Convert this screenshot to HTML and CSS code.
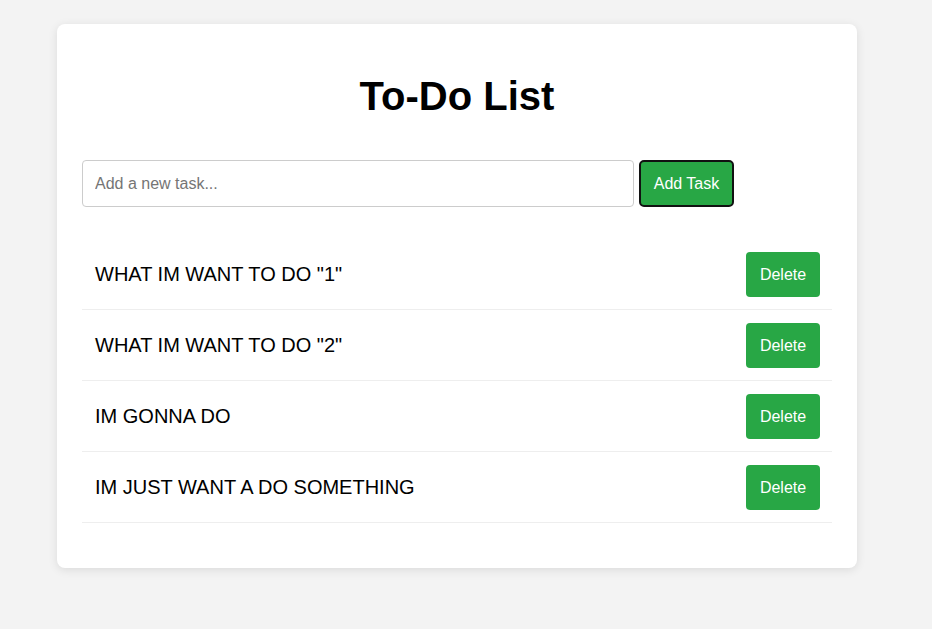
FILE: index.html
```html
<!DOCTYPE html>
<html lang="en">
<head>
<meta charset="UTF-8">
<title>To-Do List</title>
<link rel="stylesheet" href="styles.css">
</head>
<body>
<div class="card">
  <h1 class="title">To-Do List</h1>
  <div class="add-row">
    <input class="task-input" type="text" placeholder="Add a new task...">
    <button class="add-btn">Add Task</button>
  </div>
  <ul class="task-list">
    <li class="task"><span class="task-text">WHAT IM WANT TO DO "1"</span><button class="del-btn">Delete</button></li>
    <li class="task"><span class="task-text">WHAT IM WANT TO DO "2"</span><button class="del-btn">Delete</button></li>
    <li class="task"><span class="task-text">IM GONNA DO</span><button class="del-btn">Delete</button></li>
    <li class="task"><span class="task-text">IM JUST WANT A DO SOMETHING</span><button class="del-btn">Delete</button></li>
  </ul>
</div>
</body>
</html>
```

FILE: styles.css
```css
html, body {
  margin: 0;
  padding: 0;
}
body {
  background: #f3f3f3;
  font-family: "Liberation Sans", Arial, sans-serif;
  padding: 24px 18px 0 0;
  min-height: 629px;
  box-sizing: border-box;
}
.card {
  width: 800px;
  box-sizing: border-box;
  margin: 0 auto;
  background: #fff;
  border-radius: 8px;
  box-shadow: 0 2px 10px rgba(0, 0, 0, 0.1);
  padding: 25px;
}
.title {
  margin: 24px 0 41px;
  text-align: center;
  font-size: 40px;
  font-weight: bold;
  line-height: 46px;
  color: #000;
}
.add-row {
  display: flex;
  gap: 5px;
}
.task-input {
  width: 552px;
  height: 47px;
  box-sizing: border-box;
  border: 1px solid #ccc;
  border-radius: 4px;
  padding: 0 12px;
  font-family: inherit;
  font-size: 16px;
  color: #000;
  outline: none;
}
.task-input::placeholder {
  color: #757575;
}
.add-btn {
  width: 95px;
  height: 47px;
  box-sizing: border-box;
  background: #28a745;
  color: #fff;
  border: 2px solid #111;
  border-radius: 5px;
  font-family: inherit;
  font-size: 16px;
  padding: 0;
}
.task-list {
  list-style: none;
  margin: 32px 0 20px;
  padding: 0;
}
.task {
  display: flex;
  align-items: center;
  justify-content: space-between;
  padding: 13px 12px 12px 13px;
  border-bottom: 1px solid #eee;
}
.task-text {
  font-size: 20px;
  color: #000;
}
.del-btn {
  width: 74px;
  height: 45px;
  box-sizing: border-box;
  background: #28a745;
  color: #fff;
  border: none;
  border-radius: 4px;
  font-family: inherit;
  font-size: 16px;
  padding: 0;
}
```
